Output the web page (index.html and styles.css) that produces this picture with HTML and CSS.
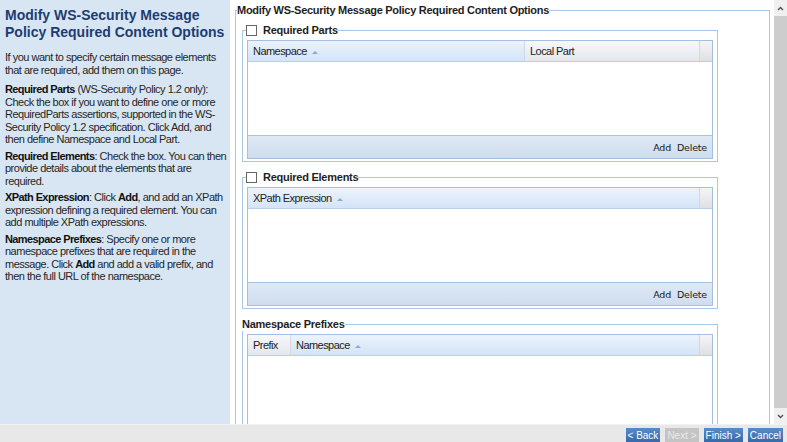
FILE: index.html
```html
<!DOCTYPE html>
<html>
<head>
<meta charset="utf-8">
<title>Modify WS-Security Message Policy Required Content Options</title>
<link rel="stylesheet" href="styles.css">
</head>
<body>
<div class="app">
  <div class="main">
    <aside class="side">
      <h1 class="title">Modify WS-Security Message<br>Policy Required Content Options</h1>
      <p class="intro">If you want to specify certain message elements<br>that are required, add them on this page.</p>
      <p><b>Required Parts</b> (WS-Security Policy 1.2 only):<br>Check the box if you want to define one or more<br>RequiredParts assertions, supported in the WS-<br>Security Policy 1.2 specification. Click Add, and<br>then define Namespace and Local Part.</p>
      <p><b>Required Elements</b>: Check the box. You can then<br>provide details about the elements that are<br>required.</p>
      <p><b>XPath Expression</b>: Click <b>Add</b>, and add an XPath<br>expression defining a required element. You can<br>add multiple XPath expressions.</p>
      <p><b>Namespace Prefixes</b>: Specify one or more<br>namespace prefixes that are required in the<br>message. Click <b>Add</b> and add a valid prefix, and<br>then the full URL of the namespace.</p>
    </aside>
    <div class="content">
      <fieldset class="outer">
        <legend class="outer-legend">Modify WS-Security Message Policy Required Content Options</legend>

        <fieldset class="group">
          <legend class="group-legend"><input type="checkbox" class="check"><span>Required Parts</span></legend>
          <div class="grid">
            <div class="grid-head">
              <div class="col sorted w-ns">Namespace<span class="arrow"></span></div>
              <div class="col plain w-lp">Local Part</div>
              <div class="col end"></div>
            </div>
            <div class="grid-body"></div>
            <div class="grid-foot"><span>Add</span><span>Delete</span></div>
          </div>
        </fieldset>

        <fieldset class="group">
          <legend class="group-legend"><input type="checkbox" class="check"><span>Required Elements</span></legend>
          <div class="grid">
            <div class="grid-head">
              <div class="col sorted w-xp">XPath Expression<span class="arrow"></span></div>
              <div class="col end"></div>
            </div>
            <div class="grid-body"></div>
            <div class="grid-foot"><span>Add</span><span>Delete</span></div>
          </div>
        </fieldset>

        <fieldset class="group">
          <legend class="group-legend plain-legend">Namespace Prefixes</legend>
          <div class="grid">
            <div class="grid-head">
              <div class="col plain w-pf">Prefix</div>
              <div class="col sorted w-ns2">Namespace<span class="arrow"></span></div>
              <div class="col end"></div>
            </div>
            <div class="grid-body tall"></div>
          </div>
        </fieldset>
      </fieldset>
    </div>
    <div class="scrollbar">
      <div class="sb-btn">
        <svg width="7" height="5" viewBox="0 0 7 5"><polyline points="1,4 3.5,1.5 6,4" fill="none" stroke="#4d4d4d" stroke-width="1.3"/></svg>
      </div>
      <div class="sb-thumb"></div>
      <div class="sb-btn">
        <svg width="7" height="5" viewBox="0 0 7 5"><polyline points="1,1 3.5,3.5 6,1" fill="none" stroke="#4d4d4d" stroke-width="1.3"/></svg>
      </div>
    </div>
  </div>
  <div class="bottom">
    <button class="btn">&lt; Back</button>
    <button class="btn disabled">Next &gt;</button>
    <button class="btn">Finish &gt;</button>
    <button class="btn">Cancel</button>
  </div>
</div>
</body>
</html>
```
FILE: styles.css
```css
* { box-sizing: border-box; }
html, body { margin: 0; padding: 0; }
body {
  font-family: "Liberation Sans", Arial, sans-serif;
  color: #222;
  background: #fff;
}
.app {
  width: 787px;
  height: 442px;
  display: flex;
  flex-direction: column;
  overflow: hidden;
}
.main {
  display: flex;
  height: 424px;
  flex: none;
}

/* left help panel */
.side {
  width: 230px;
  flex: none;
  background: #d8e6f4;
  padding: 7px 3px 0 5px;
  overflow: hidden;
}
.title {
  margin: 0 0 10px;
  font-size: 14px;
  line-height: 17px;
  font-weight: bold;
  color: #1d3d72;
  white-space: nowrap;
}
.side p {
  margin: 0 0 4px;
  font-size: 11px;
  line-height: 12.5px;
  letter-spacing: -0.5px;
  white-space: nowrap;
  color: #262626;
}
.side p.intro { margin-bottom: 7px; }
.side b { color: #111; letter-spacing: -0.6px; }

/* right content */
.content {
  flex: 1;
  min-width: 0;
  padding: 3px 4px 0 5px;
  overflow: hidden;
}
.outer {
  margin: 0;
  padding: 6px 0 0 6px;
  border: 1px solid #a9c7e8;
  min-width: 0;
}
.outer-legend {
  padding: 0;
  margin-left: -5px;
  font-size: 11px;
  line-height: 14px;
  font-weight: bold;
  letter-spacing: -0.28px;
  color: #1e1e1e;
}
.group {
  width: 476px;
  margin: 0 0 8px;
  padding: 3px 4px 2px;
  border: 1px solid #a9c7e8;
  min-width: 0;
}
.group-legend {
  padding: 0;
  margin-left: -1px;
  display: flex;
  align-items: center;
  gap: 6px;
  height: 14px;
  font-size: 11px;
  line-height: 14px;
  font-weight: bold;
  letter-spacing: -0.25px;
  color: #1e1e1e;
}
.plain-legend { margin-left: -5px; }
.check {
  appearance: none;
  -webkit-appearance: none;
  width: 11px;
  height: 11px;
  margin: 0;
  border: 1px solid #666;
  background: #fff;
  flex: none;
}

/* grids */
.grid {
  border: 1px solid #a3c0e4;
  background: #fff;
}
.grid-head {
  display: flex;
  height: 21px;
  border-bottom: 1px solid #b7cfea;
}
.col {
  height: 100%;
  display: flex;
  align-items: center;
  padding-left: 5px;
  font-size: 11px;
  letter-spacing: -0.55px;
  color: #222;
  border-right: 1px solid #cbdaeb;
  flex: none;
}
.sorted { background: linear-gradient(#ecf3fc, #d4e4f7); }
.plain { background: linear-gradient(#f7f8fa, #e3e7ec); border-right-color: #d3d9e0; }
.end {
  width: 12px;
  flex: 1;
  padding: 0;
  border-right: none;
  background: linear-gradient(#f5f5f5, #e0e0e0);
}
.w-ns { width: 277px; }
.w-lp { width: 175px; }
.w-xp { width: 452px; }
.w-pf { width: 43px; }
.w-ns2 { width: 409px; }
.arrow {
  width: 0;
  height: 0;
  margin-left: 5px;
  margin-top: 2px;
  border-left: 3px solid transparent;
  border-right: 3px solid transparent;
  border-bottom: 3px solid #86acd9;
}
.grid-body { height: 73px; background: #fff; }
.grid-body.tall { height: 140px; }
.grid-foot {
  height: 23px;
  border-top: 1px solid #a7c3e6;
  background: linear-gradient(#dfe9f6, #cedded);
  display: flex;
  align-items: center;
  justify-content: flex-end;
  gap: 6px;
  padding-right: 5px;
  font-family: "DejaVu Sans", Verdana, sans-serif;
  font-size: 9.5px;
  letter-spacing: -0.2px;
  color: #1c1c1c;
}

/* scrollbar */
.scrollbar {
  width: 13px;
  flex: none;
  display: flex;
  flex-direction: column;
  background: #f0f0f0;
}
.sb-btn {
  height: 16px;
  display: flex;
  align-items: center;
  justify-content: center;
  flex: none;
}
.sb-thumb {
  flex: 1;
  background: #cdcdcd;
}

/* bottom bar */
.bottom {
  height: 18px;
  flex: none;
  background: #e8e8e8;
  border-top: 1px solid #f2f2f2;
  display: flex;
  justify-content: flex-end;
  gap: 5px;
  padding: 3px 4px 0 0;
}
.btn {
  height: 15px;
  margin: 0;
  padding: 0 2px;
  border: none;
  font-family: "Liberation Sans", Arial, sans-serif;
  font-size: 10px;
  line-height: 15px;
  color: #fff;
  background: linear-gradient(#5a8bc8, #3467a9);
}
.btn.disabled {
  background: #c4c4c4;
  color: #e9e9e9;
}
```
